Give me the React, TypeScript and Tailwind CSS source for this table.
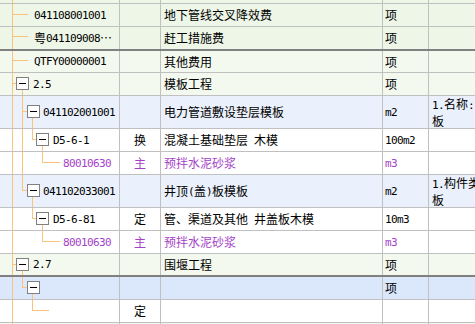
import React from 'react';

/* ───────────── text: CJK runs at 12px, ascii runs in a mono face ───────────── */

const CJK = /([\u2026\u3000-\u303f\u4e00-\u9fff\uff00-\uffef]+)/;

function Txt({ s }: { s: string }) {
  return (
    <>
      {s
        .split(CJK)
        .filter(Boolean)
        .map((p, i) =>
          CJK.test(p) ? (
            <span key={i} className="text-[12px] font-['Noto_Sans_CJK_SC',sans-serif]">
              {p}
            </span>
          ) : (
            <span
              key={i}
              className="text-[11px] tracking-[-0.62px] font-['DejaVu_Sans_Mono',monospace] whitespace-pre"
            >
              {p}
            </span>
          )
        )}
    </>
  );
}

/* ───────────── tree connectors (page coordinates) ───────────── */

const ORANGE = '#fbc27a';
const VLINES = [
  [12, 0, 324],
  [22, 89, 190],
  [32, 117, 139],
  [42, 145, 162],
  [32, 196, 218],
  [42, 224, 241],
  [22, 270, 287],
  [32, 293, 310],
];
const HLINES = [
  [14, 12, 28],
  [36, 12, 28],
  [60, 12, 28],
  [83, 12, 16],
  [111, 22, 27],
  [139, 32, 36],
  [162, 42, 60],
  [190, 22, 27],
  [218, 32, 36],
  [241, 42, 60],
  [264, 12, 16],
  [287, 22, 27],
  [310, 32, 49],
];
const BOXES = [
  [16, 77],
  [27, 105],
  [36, 133],
  [27, 184],
  [36, 212],
  [16, 258],
  [27, 281],
];

function Tree({ top, h }: { top: number; h: number }) {
  return (
    <svg
      className="absolute left-0 top-0"
      width={119}
      height={h}
      viewBox={`0 ${top} 119 ${h}`}
      shapeRendering="crispEdges"
    >
      {VLINES.map(([x, y1, y2], i) => (
        <line key={'v' + i} x1={x + 0.5} y1={y1} x2={x + 0.5} y2={y2 + 1} stroke={ORANGE} />
      ))}
      {HLINES.map(([y, x1, x2], i) => (
        <line key={'h' + i} x1={x1} y1={y + 0.5} x2={x2} y2={y + 0.5} stroke={ORANGE} />
      ))}
      {BOXES.map(([x, y], i) => (
        <g key={'b' + i}>
          <rect x={x + 0.5} y={y + 0.5} width={12} height={12} fill="#fff" stroke="#808080" />
          <line x1={x + 3} y1={y + 6.5} x2={x + 10} y2={y + 6.5} stroke="#000" />
        </g>
      ))}
    </svg>
  );
}

/* ───────────── rows ───────────── */

type Row = {
  top: number;
  h: number;
  bg: string;
  thick?: boolean;
  code?: string;
  codeX?: number;
  mark?: string;
  name?: string;
  unit?: string;
  desc?: [string, string];
  purple?: boolean;
};

const G1 = 'bg-[#edf6e7]';
const G2 = 'bg-[#f4f9f0]';
const BL = 'bg-[#eaf1fc]';
const SEL = 'bg-[#dbe8fb]';
const WH = 'bg-white';

const ROWS: Row[] = [
  { top: 0, h: 3, bg: G1 },
  { top: 4, h: 22, bg: G1, code: '041108001001', codeX: 34, name: '地下管线交叉降效费', unit: '项' },
  { top: 27, h: 22, bg: G1, thick: true, code: '粤041109008…', codeX: 34, name: '赶工措施费', unit: '项' },
  { top: 51, h: 21, bg: G2, code: 'QTFY00000001', codeX: 34, name: '其他费用', unit: '项' },
  { top: 73, h: 22, bg: G2, code: '2.5', codeX: 33, name: '模板工程', unit: '项' },
  {
    top: 96, h: 32, bg: BL, code: '041102001001', codeX: 43, name: '电力管道敷设垫层模板', unit: 'm2',
    desc: ['1.名称:电力管道敷设垫层模', '板'],
  },
  { top: 129, h: 22, bg: WH, code: 'D5-6-1', codeX: 53, mark: '换', name: '混凝土基础垫层 木模', unit: '100m2' },
  { top: 152, h: 22, bg: WH, code: '80010630', codeX: 63, mark: '主', name: '预拌水泥砂浆', unit: 'm3', purple: true },
  {
    top: 175, h: 32, bg: BL, code: '041102033001', codeX: 43, name: '井顶(盖)板模板', unit: 'm2',
    desc: ['1.构件类型:井顶(盖)板模', '板'],
  },
  { top: 208, h: 22, bg: WH, code: 'D5-6-81', codeX: 53, mark: '定', name: '管、渠道及其他 井盖板木模', unit: '10m3' },
  { top: 231, h: 22, bg: WH, code: '80010630', codeX: 63, mark: '主', name: '预拌水泥砂浆', unit: 'm3', purple: true },
  { top: 254, h: 21, bg: G2, thick: true, code: '2.7', codeX: 33, name: '围堰工程', unit: '项' },
  { top: 277, h: 22, bg: SEL, unit: '项' },
  { top: 300, h: 22, bg: WH, mark: '定' },
  { top: 323, h: 8, bg: G2 },
];

function TableRow({ r }: { r: Row }) {
  const color = r.purple ? 'text-[#a43fc8]' : 'text-black';
  return (
    <div
      className={`flex shrink-0 ${r.bg} ${color} ${
        r.thick ? 'border-b-2 border-[#808080]' : 'border-b border-[#c0c0c0]'
      }`}
      style={{ height: r.h + (r.thick ? 2 : 1) }}
    >
      <div className="relative w-[120px] shrink-0 border-r border-[#c0c0c0] overflow-hidden">
        <Tree top={r.top} h={r.h} />
        {r.code && (
          <div
            className="relative flex h-full items-center whitespace-nowrap leading-none"
            style={{ paddingLeft: r.codeX }}
          >
            <Txt s={r.code} />
          </div>
        )}
      </div>
      <div className="flex w-[41px] shrink-0 items-center justify-center border-r border-[#c0c0c0] leading-none">
        {r.mark && <Txt s={r.mark} />}
      </div>
      <div className="flex w-[222px] shrink-0 items-center overflow-hidden whitespace-nowrap border-r border-[#c0c0c0] pl-[3px] leading-none">
        {r.name && <Txt s={r.name} />}
      </div>
      <div className="flex w-[46px] shrink-0 items-center overflow-hidden whitespace-nowrap border-r border-[#c0c0c0] pl-[2px] leading-none">
        {r.unit && <Txt s={r.unit} />}
      </div>
      <div className="flex min-w-0 flex-1 flex-col justify-center overflow-hidden whitespace-nowrap pl-[3px] leading-[15px]">
        {r.desc?.map((d, i) => (
          <div key={i}>
            <Txt s={d} />
          </div>
        ))}
      </div>
    </div>
  );
}

export default function App() {
  return (
    <div className="flex h-[324px] w-[475px] flex-col overflow-hidden bg-white">
      {ROWS.map((r) => (
        <TableRow key={r.top} r={r} />
      ))}
    </div>
  );
}
